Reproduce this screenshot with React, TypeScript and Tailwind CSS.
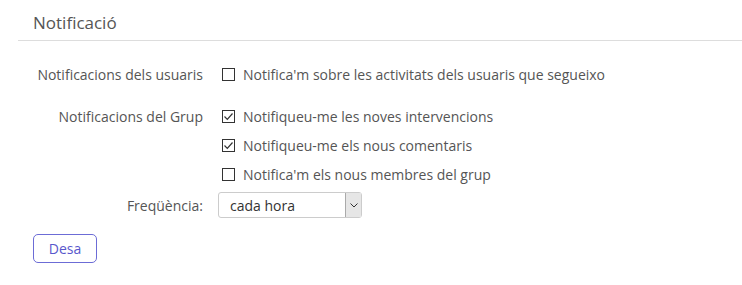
import React from "react";

function Box({ checked }: { checked?: boolean }) {
  return (
    <span className="ml-[4px] mr-[8px] inline-flex h-[13px] w-[13px] shrink-0 items-center justify-center border border-[#333] bg-white">
      {checked && (
        <svg width="11" height="11" viewBox="0 0 11 11">
          <path d="M1.5 5.5 L4.3 8.3 L9.5 2.5" fill="none" stroke="#333" strokeWidth="1.2" />
        </svg>
      )}
    </span>
  );
}

function Check({ checked, label }: { checked?: boolean; label: string }) {
  return (
    <div className="flex h-[20px] items-center">
      <Box checked={checked} />
      <span>{label}</span>
    </div>
  );
}

export default function App() {
  return (
    <div
      className="h-[285px] w-[742px] bg-white text-[14px] text-[#555]"
      style={{ fontFamily: '"Segoe UI", "Open Sans", sans-serif' }}
    >
      <div className="pl-[18px] pt-[10px]">
        <div className="border-b border-[#ddd] pb-[4px] pl-[15px] text-[17px] leading-[26px] text-[#555]">
          Notificació
        </div>
        <div className="mt-[23px] grid grid-cols-[185px_1fr] gap-x-[15px]">
          <div className="flex h-[20px] items-center justify-end">Notificacions dels usuaris</div>
          <div>
            <Check label="Notifica'm sobre les activitats dels usuaris que segueixo" />
          </div>
          <div className="mt-[22px] flex h-[20px] items-center justify-end">Notificacions del Grup</div>
          <div className="mt-[22px] flex flex-col gap-[9px]">
            <Check checked label="Notifiqueu-me les noves intervencions" />
            <Check checked label="Notifiqueu-me els nous comentaris" />
            <Check label="Notifica'm els nous membres del grup" />
          </div>
          <div className="mt-[8px] flex h-[26px] items-center justify-end">Freqüència:</div>
          <div className="mt-[8px] flex">
            <div className="flex h-[26px] w-[144px] items-stretch rounded-[3px] border border-[#ccc] bg-white">
              <span className="flex flex-1 items-center pl-[11px] text-[#333]">cada hora</span>
              <span className="flex w-[16px] items-center justify-center border-l border-[#aaa] bg-[#e6e6e6]">
                <svg width="8" height="5" viewBox="0 0 8 5">
                  <path d="M0.5 0.5 L4 4 L7.5 0.5" fill="none" stroke="#333" strokeWidth="1" />
                </svg>
              </span>
            </div>
          </div>
        </div>
        <div className="mt-[16px] pl-[15px]">
          <button className="h-[29px] w-[64px] rounded-[5px] border border-[#6c6cd6] bg-white text-[14px] text-[#5858cc]">
            Desa
          </button>
        </div>
      </div>
    </div>
  );
}
